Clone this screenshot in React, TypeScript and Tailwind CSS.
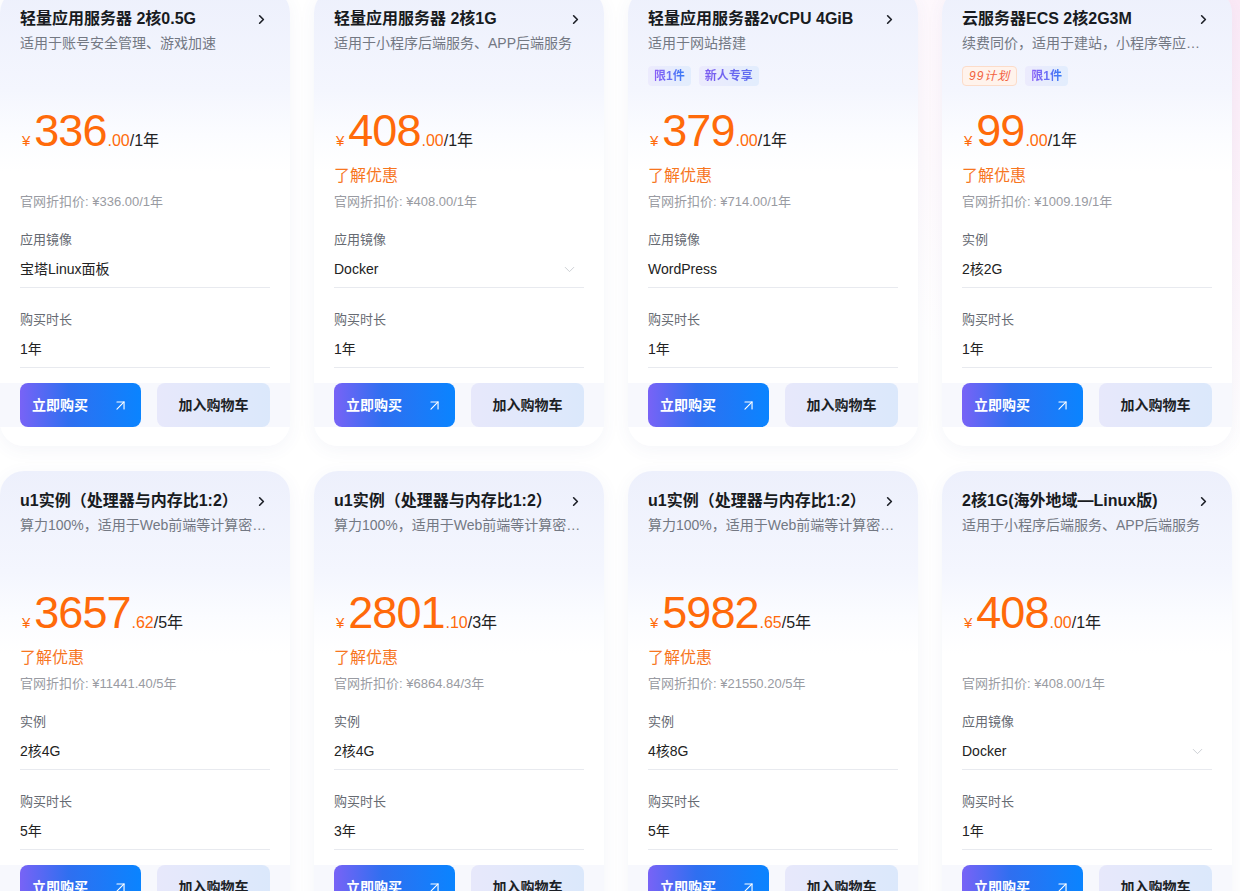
import React from "react";
import { ChevronRight, ChevronDown, ArrowUpRight } from "lucide-react";

type Tag = "limit" | "new" | "99";
type Item = {
  title: string;
  desc: string;
  tags: Tag[];
  price: string;
  cents: string;
  unit: string;
  promo: boolean;
  list: string;
  label: string;
  value: string;
  select: boolean;
  duration: string;
};

const items: Item[] = [
  { title: "轻量应用服务器 2核0.5G", desc: "适用于账号安全管理、游戏加速", tags: [], price: "336", cents: ".00", unit: "/1年", promo: false, list: "官网折扣价: ¥336.00/1年", label: "应用镜像", value: "宝塔Linux面板", select: false, duration: "1年" },
  { title: "轻量应用服务器 2核1G", desc: "适用于小程序后端服务、APP后端服务", tags: [], price: "408", cents: ".00", unit: "/1年", promo: true, list: "官网折扣价: ¥408.00/1年", label: "应用镜像", value: "Docker", select: true, duration: "1年" },
  { title: "轻量应用服务器2vCPU 4GiB", desc: "适用于网站搭建", tags: ["limit", "new"], price: "379", cents: ".00", unit: "/1年", promo: true, list: "官网折扣价: ¥714.00/1年", label: "应用镜像", value: "WordPress", select: false, duration: "1年" },
  { title: "云服务器ECS 2核2G3M", desc: "续费同价，适用于建站，小程序等应用场景，新老同享", tags: ["99", "limit"], price: "99", cents: ".00", unit: "/1年", promo: true, list: "官网折扣价: ¥1009.19/1年", label: "实例", value: "2核2G", select: false, duration: "1年" },
  { title: "u1实例（处理器与内存比1:2）", desc: "算力100%，适用于Web前端等计算密集型场景", tags: [], price: "3657", cents: ".62", unit: "/5年", promo: true, list: "官网折扣价: ¥11441.40/5年", label: "实例", value: "2核4G", select: false, duration: "5年" },
  { title: "u1实例（处理器与内存比1:2）", desc: "算力100%，适用于Web前端等计算密集型场景", tags: [], price: "2801", cents: ".10", unit: "/3年", promo: true, list: "官网折扣价: ¥6864.84/3年", label: "实例", value: "2核4G", select: false, duration: "3年" },
  { title: "u1实例（处理器与内存比1:2）", desc: "算力100%，适用于Web前端等计算密集型场景", tags: [], price: "5982", cents: ".65", unit: "/5年", promo: true, list: "官网折扣价: ¥21550.20/5年", label: "实例", value: "4核8G", select: false, duration: "5年" },
  { title: "2核1G(海外地域—Linux版)", desc: "适用于小程序后端服务、APP后端服务", tags: [], price: "408", cents: ".00", unit: "/1年", promo: false, list: "官网折扣价: ¥408.00/1年", label: "应用镜像", value: "Docker", select: true, duration: "1年" },
];

function TagChip({ t }: { t: Tag }) {
  if (t === "99") {
    return (
      <span className="h-[20px] px-[6px] rounded-[4px] border border-[#fcdcc9] bg-[#fff3ec] flex items-center text-[12px] italic text-[#f2603c] tracking-[1px]">
        99计划
      </span>
    );
  }
  return (
    <span className="h-[20px] px-[6px] rounded-[4px] bg-gradient-to-r from-[#ecebfd] to-[#e2edfd] flex items-center text-[12px] font-bold">
      <span
        className={
          t === "limit"
            ? "bg-gradient-to-r from-[#8b5cf6] to-[#2f7cf6] bg-clip-text text-transparent"
            : "bg-gradient-to-r from-[#7c5cf0] to-[#5b6ff0] bg-clip-text text-transparent"
        }
      >
        {t === "limit" ? "限1件" : "新人专享"}
      </span>
    </span>
  );
}

function Card({ it }: { it: Item }) {
  return (
    <div className="w-[290px] h-[457px] rounded-[24px] px-5 pt-[19px] pb-[19px] flex flex-col bg-[linear-gradient(180deg,#edf0fc_0%,#f4f6fe_22%,#fbfcff_32%,#ffffff_40%)] shadow-[0_4px_18px_rgba(60,80,160,0.06)]">
      <div className="h-[22px] flex items-center justify-between">
        <span className="text-[16px] leading-[22px] font-bold text-[#181b21] whitespace-nowrap">{it.title}</span>
        <ChevronRight size={15} strokeWidth={2.6} className="text-[#1c1f26] mr-[1px] shrink-0" />
      </div>
      <div className="mt-[3px] h-[20px] text-[14px] leading-[20px] text-[#737883] truncate">{it.desc}</div>
      <div className="mt-[13px] h-[20px] flex gap-2">
        {it.tags.map((t) => (
          <TagChip key={t} t={t} />
        ))}
      </div>
      <div className="mt-[21px] h-[48px] flex items-baseline leading-[48px] text-[#ff6a0a]">
        <span className="text-[15px] mr-[4px] ml-[2px]">¥</span>
        <span className="text-[45px] tracking-[-1px]">{it.price}</span>
        <span className="text-[16px] ml-[1px]">{it.cents}</span>
        <span className="text-[16px] text-[#222]">{it.unit}</span>
      </div>
      <div className="mt-[10px] h-[22px] text-[16px] leading-[22px] text-[#f7761f]">{it.promo ? "了解优惠" : ""}</div>
      <div className="mt-[6px] h-[18px] text-[13px] leading-[18px] text-[#999ba2]">{it.list}</div>
      <div className="mt-[20px] h-[18px] text-[13px] leading-[18px] text-[#666a72]">{it.label}</div>
      <div className="mt-[2px] h-[37px] flex items-center justify-between border-b border-[#e8eaef] text-[14px] text-[#222]">
        <span>{it.value}</span>
        {it.select && <ChevronDown size={17} strokeWidth={1.2} className="text-[#c4c7cd] mr-[6px]" />}
      </div>
      <div className="mt-[23px] h-[18px] text-[13px] leading-[18px] text-[#666a72]">购买时长</div>
      <div className="mt-[2px] h-[37px] flex items-center border-b border-[#e8eaef] text-[14px] text-[#222]">{it.duration}</div>
      <div className="mt-[15px] -mx-5 px-5 h-[44px] flex gap-4 bg-[#f7f8fd]">
        <button className="w-[121px] h-[44px] rounded-[8px] pl-3 pr-[12px] flex items-center justify-between bg-[linear-gradient(90deg,#7863f6_0%,#2f6ff0_40%,#0a84ff_100%)] text-white text-[14px] font-bold">
          <span>立即购买</span>
          <ArrowUpRight size={17} strokeWidth={1.6} />
        </button>
        <button className="w-[113px] h-[44px] rounded-[8px] flex items-center justify-center bg-[linear-gradient(90deg,#e7e8fb_0%,#dbe8fb_100%)] text-[#1c1f26] text-[14px] font-bold">
          加入购物车
        </button>
      </div>
    </div>
  );
}

export default function App() {
  return (
    <div
      className="w-[1240px] h-[891px] overflow-hidden bg-[radial-gradient(circle_at_100%_0%,#fbe9f6_0%,#ffffff_30%)]"
      style={{ fontFamily: '"Liberation Sans", "Noto Sans CJK SC", sans-serif' }}
    >
      <div className="-mt-[11px] grid grid-cols-[repeat(4,290px)] gap-x-6 gap-y-[25px]">
        {items.map((it, i) => (
          <Card key={i} it={it} />
        ))}
      </div>
    </div>
  );
}
